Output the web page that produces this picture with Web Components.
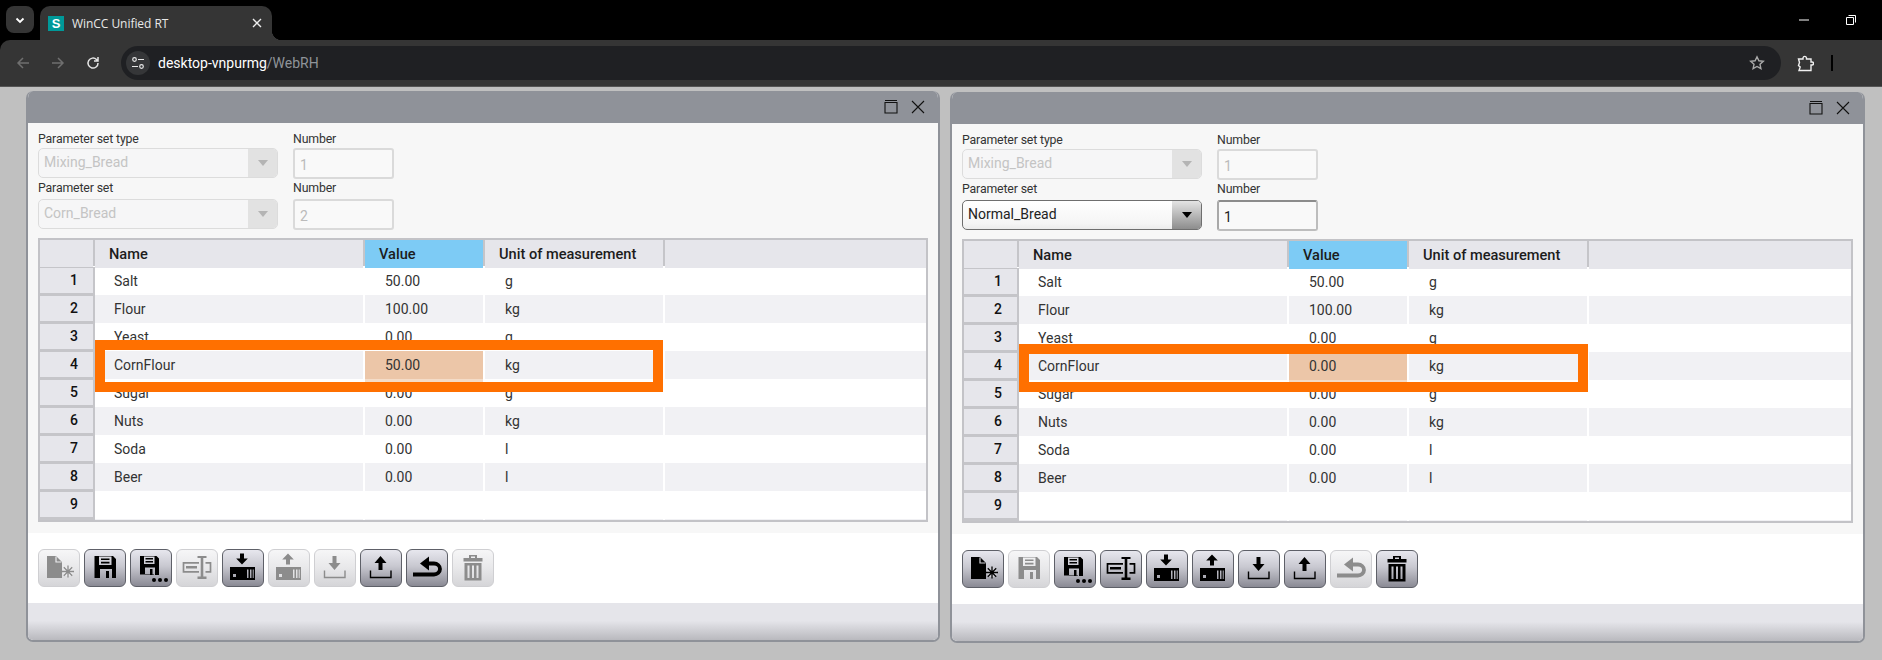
<!DOCTYPE html>
<html><head><meta charset="utf-8"><title>WinCC Unified RT</title>
<style>
html,body{margin:0;padding:0;background:#c0c0c0;height:660px;overflow:hidden;font-family:Roboto,"Liberation Sans",sans-serif}
.desk{display:flex;gap:10px;padding:4px 0 0 26px;align-items:flex-start}
</style></head><body>
<browser-chrome></browser-chrome>
<div class="desk">
  <rh-window style="width:914px">
    <rh-form slot="form" type="Mixing_Bread" type-no="1" set="Corn_Bread" set-no="2" locked></rh-form>
    <rh-table slot="table" hl="50.00"></rh-table>
    <rh-toolbar slot="tools" states="0110100110"></rh-toolbar>
  </rh-window>
  <rh-window style="width:915px;margin-top:1px">
    <rh-form slot="form" type="Mixing_Bread" type-no="1" set="Normal_Bread" set-no="1"></rh-form>
    <rh-table slot="table" hl="0.00" style="width:891px;--ft:105px;--fh:48px;--fw:569px"></rh-table>
    <rh-toolbar slot="tools" states="1011111101"></rh-toolbar>
  </rh-window>
</div>
<script>
const def=(name,css,html,init)=>customElements.define(name,class extends HTMLElement{
  connectedCallback(){ if(this.shadowRoot)return; const r=this.attachShadow({mode:'open'});
    r.innerHTML=`<style>${css}</style>`+(typeof html==='function'?html(this):html); if(init)init(this,r);} });

def('browser-chrome',`
:host{display:block;height:87px;background:#000;color:#fff;font-family:"Open Sans","Noto Sans",sans-serif}
.strip{height:40px;display:flex;align-items:flex-end;padding-left:6px;box-sizing:border-box;position:relative}
.drop{width:28px;height:27px;margin-bottom:7px;border-radius:8px;background:#353535;display:flex;align-items:center;justify-content:center}
.tab{width:232px;height:34px;margin-left:6px;background:#353535;border-radius:10px 10px 0 0;display:flex;align-items:center;padding:0 10px 0 8px;box-sizing:border-box;position:relative}
.tab::after{content:"";position:absolute;right:-10px;bottom:0;width:10px;height:10px;background:radial-gradient(circle at 100% 0,transparent 10px,#353535 10.5px)}
.fav{width:16px;height:15px;background:#009999;color:#fff;font:700 13px/15px "Liberation Sans",sans-serif;text-align:center;flex:none;margin-right:8px}
.title{font:12px "Open Sans",sans-serif;flex:1;color:#e8e8e8;letter-spacing:-.05px}
.win{margin-left:auto;align-self:stretch;display:flex;align-items:center;gap:37px;padding-right:26px}
.bar{height:46px;background:#353535;border-radius:10px 0 0 0;display:flex;align-items:center;box-sizing:border-box;padding-left:16px}
.nav{display:flex;align-items:center;gap:21px;width:105px;flex:none}
.addr{width:1660px;height:34px;border-radius:17px;background:#1f2023;display:flex;align-items:center;padding:0 16px 0 5px;box-sizing:border-box;flex:none}
.pill{width:24px;height:24px;border-radius:12px;background:#353638;display:flex;align-items:center;justify-content:center;margin-right:8px}
.url{font:14px Roboto,sans-serif;color:#fff;flex:1}.url i{font-style:normal;color:#8f9499}
.ext{display:flex;align-items:center;margin-left:16px;gap:17px}
.sep{width:2px;height:16px;background:#000}
.line{height:1px;background:#555}
svg{display:block}
`,`<div class="strip"><div class="drop"><svg width="12" height="12" viewBox="0 0 12 12"><path d="M2.5 4.5 6 8l3.500-3.500" fill="none" stroke="#fff" stroke-width="1.800"/></svg></div>
<div class="tab"><span class="fav">S</span><span class="title">WinCC Unified RT</span><svg width="10" height="10" viewBox="0 0 10 10"><path d="M1 1l8 8M9 1l-8 8" stroke="#eee" stroke-width="1.400"/></svg></div>
<div class="win"><svg width="10" height="2" viewBox="0 0 10 2"><path d="M0 1h10" stroke="#fff"/></svg><svg width="10" height="10" viewBox="0 0 10 10"><path d="M.5 2.500h7v7h-7zM2.500 .5h7v7" fill="none" stroke="#fff"/></svg></div></div>
<div class="bar"><div class="nav">
<svg width="14" height="14" viewBox="0 0 14 14"><path d="M13 7H2M7 2 2 7l5 5" fill="none" stroke="#6f6f6f" stroke-width="1.500"/></svg>
<svg width="14" height="14" viewBox="0 0 14 14"><path d="M1 7h11M7 2l5 5-5 5" fill="none" stroke="#6f6f6f" stroke-width="1.500"/></svg>
<svg width="14" height="14" viewBox="0 0 14 14"><path d="M12 7a5 5 0 1 1-1.500-3.500L12 5M12 1v4H8" fill="none" stroke="#e4e4e4" stroke-width="1.500"/></svg></div>
<div class="addr"><div class="pill"><svg width="14" height="14" viewBox="0 0 14 14"><g fill="none" stroke="#e8e8e8" stroke-width="1.200"><circle cx="3.500" cy="3.500" r="1.800"/><path d="M7 3.500h6M1 10.500h6"/><circle cx="10.500" cy="10.500" r="1.800"/></g></svg></div><div class="url">desktop-vnpurmg<i>/WebRH</i></div>
<svg width="16" height="16" viewBox="0 0 16 16"><path d="M8 1.800l1.900 4 4.400.5-3.300 3 .9 4.400L8 11.500l-3.900 2.200.9-4.400-3.300-3 4.400-.5z" fill="none" stroke="#aaa" stroke-width="1.400"/></svg></div>
<div class="ext"><svg width="17" height="17" viewBox="0 0 17 17"><path d="M1.500 4H6V2.800a1.800 1.800 0 0 1 3.500 0V4H14v3h1a1.500 1.500 0 0 1 0 3h-1v5.500H2l1.200-3.500-1.700-1.500 1-3z" fill="none" stroke="#f0f0f0" stroke-width="1.400"/></svg><span class="sep"></span></div></div><div class="line"></div>`);

def('rh-window',`
:host{display:block;flex:none;box-sizing:border-box;height:551px;border:2px solid #8f9299;border-top:none;border-radius:7px 7px 7px 7px;background:#fff;overflow:hidden;display:flex;flex-direction:column}
header{height:32px;background:#8f9299;display:flex;align-items:center;justify-content:flex-end;gap:13px;padding-right:15px;margin:0 -2px;flex:none}
.main{background:#f7f7f7;padding:0 10px;height:410px;box-sizing:border-box;flex:none}
.tools{height:70px;padding:16px 10px 0;box-sizing:border-box;background:#fff;flex:none}
footer{flex:1;background:linear-gradient(#e5e5ea 0,#e5e5ea 48%,#b9b9be 100%)}
svg{display:block}
`,`<header><svg width="14" height="14" viewBox="0 0 14 14"><path d="M1 .5h12" stroke="#111"/><path d="M1 2.500h12v10.500H1z" fill="none" stroke="#111" stroke-width="1.100"/></svg><svg width="14" height="14" viewBox="0 0 14 14"><path d="M1 1l12 12M13 1 1 13" stroke="#111" stroke-width="1.100"/></svg></header>
<div class="main"><slot name="form"></slot><slot name="table"></slot></div><div class="tools"><slot name="tools"></slot></div><footer></footer>`);

def('rh-field',`
:host{display:block;font:12.300px Roboto,sans-serif;letter-spacing:-.14px;color:#333}
.l{box-sizing:border-box;height:var(--lh,16px);padding-bottom:2px;display:flex;align-items:center;line-height:14px}
`,`<div class="l"><slot name="label"></slot></div><slot></slot>`);

def('rh-select',`
:host{display:flex;box-sizing:border-box;width:240px;height:30px;border:1px solid #6e6e6e;border-radius:5px;overflow:hidden;background:linear-gradient(#fff,#f5f5f5 80%,#ececec);font:14px Roboto,sans-serif;letter-spacing:0;color:#222}
:host([disabled]){border-color:#dcdcdc;background:#f6f6f7;color:#c4c4c4}
.t{flex:1;padding-left:5px;line-height:27px}
.a{width:29px;background:linear-gradient(#e4e4e4,#8d8d8d);display:flex;align-items:center;justify-content:center}
:host([disabled]) .a{background:#e2e2e2}
.c{width:0;height:0;border:5px solid transparent;border-top:6px solid #000;border-bottom:0}
:host([disabled]) .c{border-top-color:#b4b4b4}
`,`<div class="t"><slot></slot></div><div class="a"><div class="c"></div></div>`);

def('rh-input',`
:host{display:block;box-sizing:border-box;width:101px;height:31px;border:2px solid #bdbdbd;border-top-color:#8c8c8c;border-left-color:#a8a8a8;border-radius:3px;background:#f9f9f9;font:14px/31px Roboto,sans-serif;letter-spacing:0;color:#222;padding-left:5px}
:host([disabled]){border-color:#dadada;color:#bbb}
`,`<slot></slot>`);

def('rh-form',`
:host{display:block;padding-top:9px;height:115px;box-sizing:border-box}
.r{display:grid;grid-template-columns:240px 101px;column-gap:15px}
.r+.r{--lh:20px}
`,h=>{const d=h.hasAttribute('locked')?'disabled':'';const g=h.getAttribute.bind(h);return `
<div class="r"><rh-field><span slot="label">Parameter set type</span><rh-select disabled>${g('type')}</rh-select></rh-field><rh-field><span slot="label">Number</span><rh-input disabled>${g('type-no')}</rh-input></rh-field></div>
<div class="r"><rh-field><span slot="label">Parameter set</span><rh-select ${d}>${g('set')}</rh-select></rh-field><rh-field><span slot="label">Number</span><rh-input ${d}>${g('set-no')}</rh-input></rh-field></div>`});

const cols='53px 2px 268px 2px 118px 2px 178px 2px 1fr';
def('rh-table',`
:host{display:block;position:relative;width:890px;height:284px}
.box{box-sizing:border-box;height:284px;border:2px solid #c3c3c7;background:#fff;overflow:hidden}
.hd{display:grid;grid-template-columns:${cols};height:26px;background:#c5c5c9;font:500 14.600px/28px Roboto,sans-serif;color:#1c1c1c;margin-bottom:1px}
.hd>*{background:#e6e6eb;padding-left:14px}.hd>.s{background:none;padding:0}.hd>.v{background:#7dcbf5}
.hd>.e{padding:0}
.frame{position:absolute;left:57px;top:var(--ft,102px);width:var(--fw,568px);height:var(--fh,52px);box-sizing:border-box;border:10px solid #ff7000}
`,h=>{const d=[['Salt','50.00','g'],['Flour','100.00','kg'],['Yeast','0.00','g'],['CornFlour',h.getAttribute('hl'),'kg',1],['Sugar','0.00','g'],['Nuts','0.00','kg'],['Soda','0.00','l'],['Beer','0.00','l'],['','',''],['','','']];
return `<div class="box"><div class="hd"><div class="e"></div><i class="s"></i><div>Name</div><i class="s"></i><div class="v">Value</div><i class="s"></i><div>Unit of measurement</div><i class="s"></i><div class="e"></div></div>
${d.map((r,i)=>`<rh-row n="${i<9?i+1:''}" ${i%2?'alt':''} ${r[3]?'hl':''}><span slot="name">${r[0]}</span><span slot="val">${r[1]}</span><span slot="unit">${r[2]}</span></rh-row>`).join('')}</div><div class="frame"></div>`});

def('rh-row',`
:host{display:grid;grid-template-columns:${cols};height:28px;font:14px/28px Roboto,sans-serif;color:#333}
.n{background:#e6e6eb;border-bottom:2px solid #c5c5c9;border-top:1px solid #c5c5c9;box-sizing:border-box;text-align:right;padding-right:15px;font:500 14px/24px Roboto,sans-serif;color:#111}
.g{background:#c5c5c9}
.c{padding-left:20px}.nm{padding-left:19px}
:host([alt]) .c{background:#f1f1f4}
:host([hl]) .v{background:#ecc6a8;box-shadow:0 3px 0 #f4dcc8}
`,h=>`<div class="n">${h.getAttribute('n')}</div><i class="g"></i><div class="c nm"><slot name="name"></slot></div><i></i><div class="c v"><slot name="val"></slot></div><i></i><div class="c"><slot name="unit"></slot></div><i></i><div class="c"></div>`);

const I={
 new:`<path d="M9 7h9l6 6v16H9z"/><path d="M18 7.500v5.500h5.500" fill="none" stroke="var(--bg)" stroke-width="1.200"/><circle cx="30" cy="22.500" r="5" fill="var(--bg)"/><path stroke="currentColor" stroke-width="1.300" d="M30 16.500v12M24 22.500h12M25.800 18.300l8.400 8.400M34.200 18.300l-8.400 8.400"/>`,
 save:`<path fill-rule="evenodd" d="M10.500 7H29l3 3v19H10.500zM15 7.500V16h12.500V7.500zM16 20v9h12v-9z"/><path d="M17 9.500h8.500v1.600H17zM17 12.800h8.500v1.600H17zM22 22h3v7h-3z"/>`,
 saveas:`<path fill-rule="evenodd" d="M10 7h16.500L29 9.500V26H24v-.5H10zM14 7.500V15h10.500V7.500zM15 18.500V26h10v-7.500z"/><path d="M15.500 9h7.500v1.500h-7.500zM15.500 12h7.500v1.500h-7.500zM20 20h2.500v6H20z"/><circle cx="24" cy="31" r="2"/><circle cx="30" cy="31" r="2"/><circle cx="36" cy="31" r="2"/>`,
 rename:`<path fill="none" stroke="currentColor" stroke-width="1.700" d="M23 13.800H7.500v9H23M29.500 13.800h5v9h-5"/><path d="M10 17h11v2.500H10z"/><path d="M21.500 7h9v2h-3.200v18.500h3.200v2.500h-9v-2.500h3.200V9h-3.200z"/>`,
 dl:`<path d="M18 4.500h4v5h3.800L20 15.500 14.200 9.500H18z"/><path fill-rule="evenodd" d="M8 18h25v13H8zM11 25v3h3v-3zM25 20.500v8.500h1.500v-8.500zM28 20.500v8.500h1.500v-8.500zM30.700 20.500v8.500h1v-8.500z"/>`,
 ul:`<path d="M20 4.500l5.800 6H22v5h-4v-5h-3.800z"/><path fill-rule="evenodd" d="M8 18h25v13H8zM11 25v3h3v-3zM25 20.500v8.500h1.500v-8.500zM28 20.500v8.500h1.500v-8.500zM30.700 20.500v8.500h1v-8.500z"/>`,
 tdl:`<path d="M18.500 7h4v7h4l-6 7-6-7h4z"/><path fill="none" stroke="currentColor" stroke-width="1.400" d="M10.500 21.500v7h20.500v-7"/>`,
 tul:`<path d="M20.500 7l6 7h-4v7h-4v-7h-4z"/><path fill="none" stroke="currentColor" stroke-width="1.400" d="M10.500 21.500v7h20.500v-7"/>`,
 undo:`<path d="M14 14.500l9-7v14z"/><path fill="none" stroke="currentColor" stroke-width="3.800" d="M20 14.500h8a6 5.500 0 0 1 0 11H7"/>`,
 trash:`<path d="M17 6h8v3h5.500v3.500h-19V9H17zM19 7.500V9h4V7.500z"/><path fill-rule="evenodd" d="M12.500 14h17v17.500h-17zM15.500 16.500V29h2V16.500zM20 16.500V29h2V16.500zM24.500 16.500V29h2V16.500z"/>`
};
def('rh-btn',`
:host{display:block;box-sizing:border-box;width:42px;height:38px;border:1px solid #5e6068;border-radius:6px;background:linear-gradient(#e7e7ee,#c8c8d0 45%,#8a8a94);color:#000;--bg:#cfcfd6}
:host([off]){border-color:#cfcfd2;background:linear-gradient(#f6f6f7,#e8e8ea 50%,#d5d5d8);color:#8c8c8c;--bg:#ececee}
svg{display:block;margin:-1px}
`,h=>`<svg width="42" height="38" viewBox="0 0 42 38" fill="currentColor">${I[h.getAttribute('i')]}</svg>`);

def('rh-toolbar',`:host{display:flex;gap:4px}`,h=>{const s=h.getAttribute('states');return ['new','save','saveas','rename','dl','ul','tdl','tul','undo','trash'].map((n,i)=>`<rh-btn i="${n}" ${s[i]==='1'?'':'off'}></rh-btn>`).join('')});
</script>
</body></html>
